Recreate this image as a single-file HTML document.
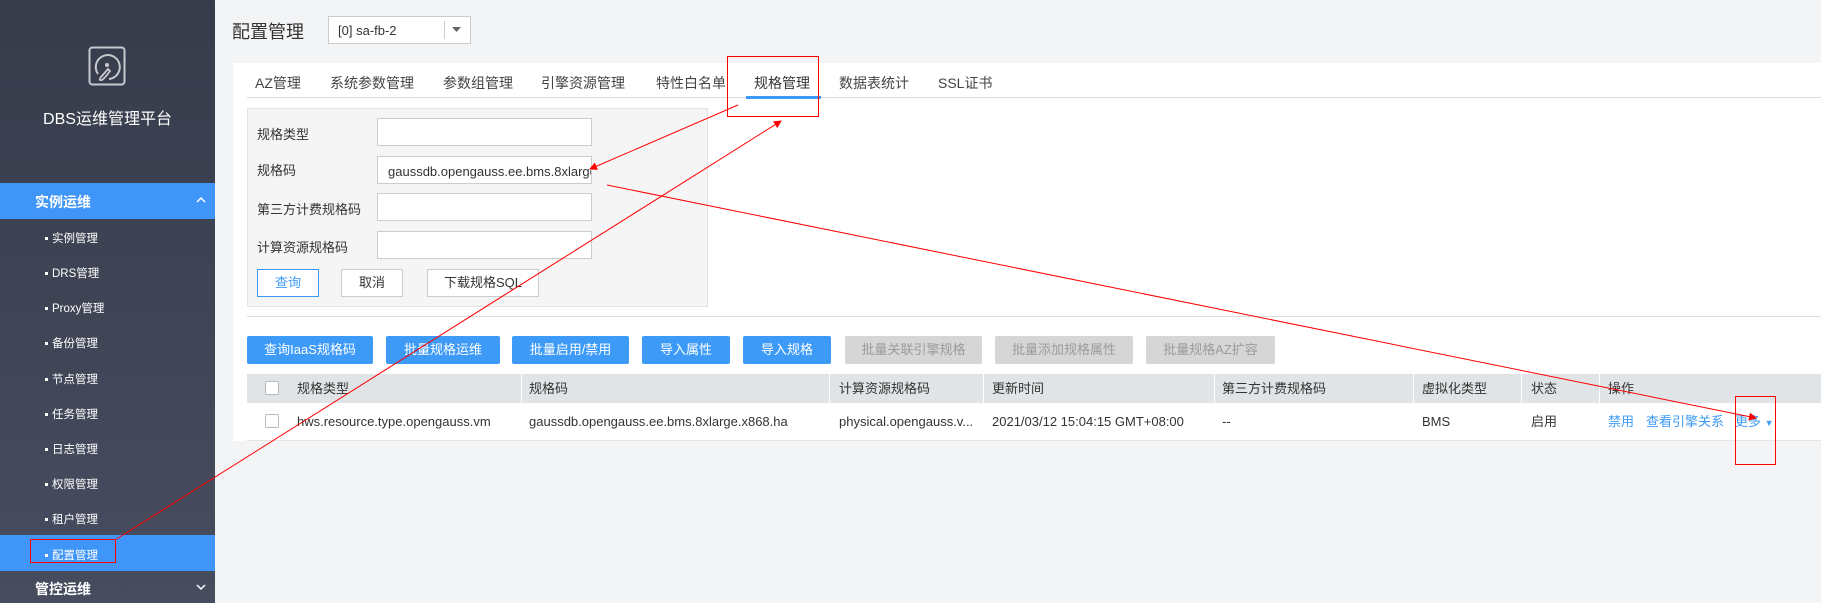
<!DOCTYPE html>
<html><head><meta charset="utf-8"><style>
*{margin:0;padding:0;box-sizing:border-box}
body{width:1821px;height:603px;overflow:hidden;background:#f3f4f6;font-family:"Liberation Sans","Noto Sans CJK SC",sans-serif;position:relative;color:#333}
.a{position:absolute;white-space:nowrap}
#side{position:absolute;left:0;top:0;width:215px;height:603px;background:linear-gradient(#373c4b,#474d5f)}
.it{position:absolute;left:52px;font-size:11.5px;color:#fff}
.it:before{content:"";position:absolute;left:-7px;top:7px;width:3px;height:3px;background:#fff}
.tab{position:absolute;top:73px;font-size:14px;color:#444}
.lbl{position:absolute;left:257px;font-size:13px;color:#333}
.inp{position:absolute;left:377px;width:215px;height:28px;background:#fff;border:1px solid #ccc;font-size:13px;padding:7px 10px;color:#333}
.btn{position:absolute;top:269px;height:28px;border:1px solid #ccc;background:#fff;font-size:13px;text-align:center;line-height:26px}
.ab{position:absolute;top:336px;height:28px;background:#3d9bf7;color:#fff;font-size:13px;text-align:center;line-height:28px;border-radius:2px}
.ab.d{background:#d6d6d6;color:#9b9b9b}
.th{position:absolute;top:374px;height:29px;line-height:29px;font-size:13px;color:#333}
.td{position:absolute;top:403px;height:37px;line-height:37px;font-size:13px;color:#333}
.sep{position:absolute;top:374px;width:1px;height:29px;background:#fff}
.cb{position:absolute;left:265px;width:14px;height:14px;border:1px solid #bbb;background:#fff;border-radius:2px}
</style></head><body>
<div id="side">
<svg class="a" style="left:88px;top:46px" width="38" height="40" viewBox="0 0 38 40"><rect x="1.5" y="1.5" width="35" height="37" rx="3" fill="none" stroke="#c8c9cf" stroke-width="2"/><path d="M10 28 A12 12 0 1 1 21 33" fill="none" stroke="#c8c9cf" stroke-width="2"/><circle cx="19" cy="19" r="2" fill="#c8c9cf"/><path d="M20 23 L13 31 Q10 35 14 34 Q17 32 22 25 Z" fill="none" stroke="#c8c9cf" stroke-width="1.8"/></svg>
<div class="a" style="left:0;width:215px;top:105px;text-align:center;color:#fff;font-size:16px">DBS运维管理平台</div>
<div class="a" style="left:0;top:183px;width:215px;height:36px;background:#4096f8"></div>
<div class="a" style="left:35px;top:192px;color:#fff;font-size:14px;font-weight:bold">实例运维</div>
<svg class="a" style="left:196px;top:196px" width="10" height="8"><path d="M1 6 L5 2 L9 6" fill="none" stroke="#fff" stroke-width="1.5"/></svg>
<div class="it" style="top:230px">实例管理</div>
<div class="it" style="top:265px">DRS管理</div>
<div class="it" style="top:300px">Proxy管理</div>
<div class="it" style="top:335px">备份管理</div>
<div class="it" style="top:371px">节点管理</div>
<div class="it" style="top:406px">任务管理</div>
<div class="it" style="top:441px">日志管理</div>
<div class="it" style="top:476px">权限管理</div>
<div class="it" style="top:511px">租户管理</div>
<div class="a" style="left:0;top:535px;width:215px;height:36px;background:#4096f8"></div>
<div class="it" style="top:547px">配置管理</div>
<div class="a" style="left:35px;top:579px;color:#fff;font-size:14px;font-weight:bold">管控运维</div>
<svg class="a" style="left:196px;top:583px" width="10" height="8"><path d="M1 2 L5 6 L9 2" fill="none" stroke="#fff" stroke-width="1.5"/></svg>
</div>

<div class="a" style="left:232px;top:18px;font-size:18px;color:#333">配置管理</div>
<div class="a" style="left:328px;top:16px;width:143px;height:28px;background:#fff;border:1px solid #ccc;font-size:13px;padding:6px 9px">[0] sa-fb-2</div>
<div class="a" style="left:444px;top:21px;width:1px;height:18px;background:#ccc"></div>
<svg class="a" style="left:452px;top:27px" width="9" height="6"><path d="M0 0 L9 0 L4.5 5Z" fill="#666"/></svg>

<div class="a" style="left:233px;top:63px;width:1588px;height:378px;background:#fff"></div>
<div class="a" style="left:247px;top:97px;width:1574px;height:1px;background:#ddd"></div>
<div class="tab" style="left:255px">AZ管理</div>
<div class="tab" style="left:330px">系统参数管理</div>
<div class="tab" style="left:443px">参数组管理</div>
<div class="tab" style="left:541px">引擎资源管理</div>
<div class="tab" style="left:656px">特性白名单</div>
<div class="tab" style="left:754px;color:#333">规格管理</div>
<div class="tab" style="left:839px">数据表统计</div>
<div class="tab" style="left:938px">SSL证书</div>
<div class="a" style="left:746px;top:96px;width:75px;height:3px;background:#3d9bf7"></div>

<div class="a" style="left:247px;top:108px;width:461px;height:199px;background:#f5f5f5;border:1px solid #e4e4e4"></div>
<div class="lbl" style="top:124px">规格类型</div>
<div class="lbl" style="top:160px">规格码</div>
<div class="lbl" style="top:199px">第三方计费规格码</div>
<div class="lbl" style="top:237px">计算资源规格码</div>
<div class="inp" style="top:118px"></div>
<div class="inp" style="top:156px;overflow:hidden">gaussdb.opengauss.ee.bms.8xlarge</div>
<div class="inp" style="top:193px"></div>
<div class="inp" style="top:231px"></div>
<div class="btn" style="left:257px;width:62px;border-color:#3d9bf7;color:#3d9bf7">查询</div>
<div class="btn" style="left:341px;width:62px">取消</div>
<div class="btn" style="left:427px;width:112px">下载规格SQL</div>

<div class="a" style="left:247px;top:316px;width:1574px;height:1px;background:#ddd"></div>
<div class="ab" style="left:247px;width:126px">查询IaaS规格码</div>
<div class="ab" style="left:386px;width:114px">批量规格运维</div>
<div class="ab" style="left:512px;width:117px">批量启用/禁用</div>
<div class="ab" style="left:642px;width:88px">导入属性</div>
<div class="ab" style="left:743px;width:88px">导入规格</div>
<div class="ab d" style="left:845px;width:137px">批量关联引擎规格</div>
<div class="ab d" style="left:995px;width:138px">批量添加规格属性</div>
<div class="ab d" style="left:1146px;width:129px">批量规格AZ扩容</div>

<div class="a" style="left:247px;top:374px;width:1574px;height:29px;background:#e1e4e6"></div>
<div class="a" style="left:247px;top:440px;width:1574px;height:1px;background:#e4e4e4"></div>
<div class="sep" style="left:521px"></div><div class="sep" style="left:829px"></div><div class="sep" style="left:983px"></div><div class="sep" style="left:1214px"></div><div class="sep" style="left:1413px"></div><div class="sep" style="left:1521px"></div><div class="sep" style="left:1599px"></div>
<div class="cb" style="top:381px"></div>
<div class="cb" style="top:414px"></div>
<div class="th" style="left:297px">规格类型</div>
<div class="th" style="left:529px">规格码</div>
<div class="th" style="left:839px">计算资源规格码</div>
<div class="th" style="left:992px">更新时间</div>
<div class="th" style="left:1222px">第三方计费规格码</div>
<div class="th" style="left:1422px">虚拟化类型</div>
<div class="th" style="left:1531px">状态</div>
<div class="th" style="left:1608px">操作</div>
<div class="td" style="left:297px">hws.resource.type.opengauss.vm</div>
<div class="td" style="left:529px">gaussdb.opengauss.ee.bms.8xlarge.x868.ha</div>
<div class="td" style="left:839px">physical.opengauss.v...</div>
<div class="td" style="left:992px">2021/03/12 15:04:15 GMT+08:00</div>
<div class="td" style="left:1222px">--</div>
<div class="td" style="left:1422px">BMS</div>
<div class="td" style="left:1531px">启用</div>
<div class="td" style="left:1608px;color:#3d9bf7">禁用</div>
<div class="td" style="left:1646px;color:#3d9bf7">查看引擎关系</div>
<div class="td" style="left:1735px;color:#3d9bf7">更多 <span style="font-size:9px">▼</span></div>

<svg class="a" style="left:0;top:0" width="1821" height="603">
<defs><marker id="m" markerWidth="8" markerHeight="8" refX="7" refY="4" orient="auto"><path d="M0 0 L8 4 L0 8Z" fill="#f00"/></marker></defs>
<g fill="none" stroke="#f00" stroke-width="1">
<rect x="727.5" y="56.5" width="91" height="60"/>
<rect x="30.5" y="539.5" width="85" height="23"/>
<rect x="1735.5" y="396.5" width="40" height="68"/>
<line x1="738" y1="105" x2="590" y2="169" marker-end="url(#m)"/>
<line x1="115" y1="540" x2="781" y2="121" marker-end="url(#m)"/>
<line x1="607" y1="185" x2="1756" y2="418" marker-end="url(#m)"/>
</g></svg>
</body></html>
